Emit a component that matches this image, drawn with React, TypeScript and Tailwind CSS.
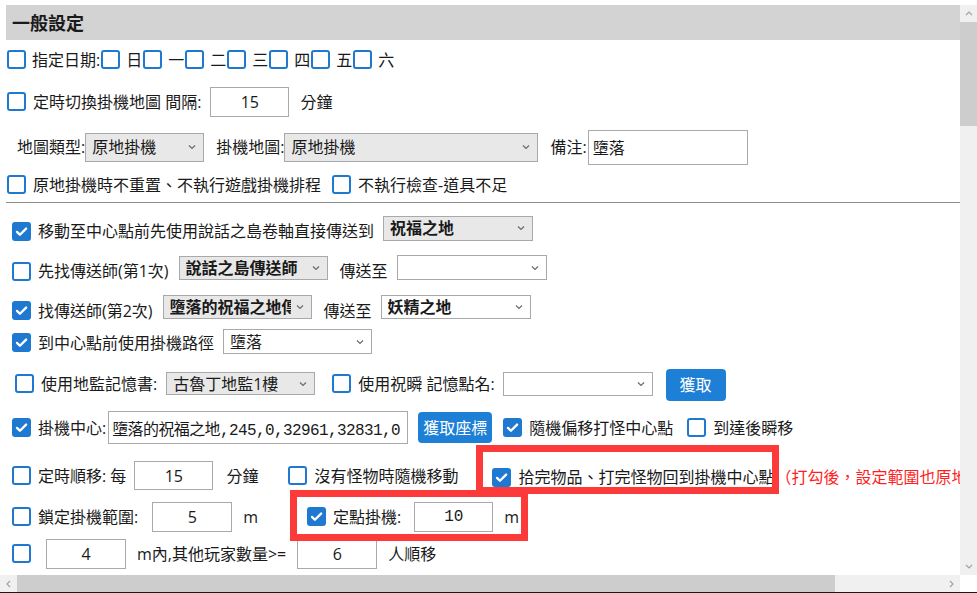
import React from "react";

type CbProps = { checked?: boolean; className?: string };

function Cb({ checked = false, className = "" }: CbProps) {
  return (
    <span
      className={
        "inline-flex shrink-0 w-[19px] h-[19px] rounded-[3px] items-center justify-center " +
        (checked ? "bg-[#1f79d1] " : "border-2 border-[#1f79d1] bg-white ") +
        className
      }
    >
      {checked && (
        <svg viewBox="0 0 16 16" className="w-[15px] h-[15px]">
          <path
            d="M3.2 8.4l3.1 3.1L12.9 4.9"
            stroke="white"
            strokeWidth="2.5"
            fill="none"
            strokeLinecap="round"
            strokeLinejoin="round"
          />
        </svg>
      )}
    </span>
  );
}

function Chevron() {
  return (
    <svg viewBox="0 0 8 5" className="w-[8px] h-[5px] absolute right-[7px] top-1/2 -translate-y-1/2">
      <path d="M1 1l3 3 3-3" stroke="#6b6b6b" strokeWidth="1.2" fill="none" />
    </svg>
  );
}

type SelProps = { text?: string; bold?: boolean; gray?: boolean; className?: string };

function Sel({ text = "", bold = false, gray = false, className = "" }: SelProps) {
  return (
    <div
      className={
        "relative shrink-0 flex items-center border border-[#a9a9a9] pl-[6px] pr-[20px] overflow-hidden whitespace-nowrap " +
        (gray ? "bg-[#e8e8e8] " : "bg-white ") +
        (bold ? "font-bold " : "") +
        className
      }
    >
      <span className="overflow-hidden leading-[20px]">{text}</span>
      <Chevron />
    </div>
  );
}

type BoxProps = { value: string; className?: string };

function Box({ value, className = "" }: BoxProps) {
  return (
    <input
      readOnly
      value={value}
      className={"shrink-0 border border-[#aaaaaa] bg-white text-center outline-none text-[#1a1a1a] " + className}
    />
  );
}

function Btn({ label, className = "" }: { label: string; className?: string }) {
  return (
    <button className={"shrink-0 rounded-[4px] bg-[#1e7fd6] text-white text-[16px] flex items-center justify-center " + className}>
      {label}
    </button>
  );
}

const days = ["日", "一", "二", "三", "四", "五", "六"];

const row = "flex items-center *:shrink-0";

export default function App() {
  return (
    <div className="relative w-[977px] h-[593px] bg-white overflow-hidden whitespace-nowrap text-[16px] leading-none text-[#1a1a1a] font-['Open_Sans','Noto_Sans_CJK_TC',sans-serif]">
      <div className="h-[5px]" />
      <div className="flex h-[570px]">
        {/* settings panel */}
        <div className="w-[960px] overflow-hidden pl-[6px]">
          <div className="h-[35px] bg-[#d3d3d3] flex items-center pl-[6px] text-[18px] font-bold">一般設定</div>

          <div className={row + " h-[39px]"}>
            <Cb className="ml-[1px]" />
            <span className="ml-[6px]">指定日期:</span>
            {days.map((d) => (
              <React.Fragment key={d}>
                <Cb className="ml-[1px]" />
                <span className="ml-[6px]">{d}</span>
              </React.Fragment>
            ))}
          </div>

          <div className={row + " h-[45px]"}>
            <Cb className="ml-[1px]" />
            <span className="ml-[7px]">定時切換掛機地圖 間隔:</span>
            <Box value="15" className="ml-[9px] w-[79px] h-[30px]" />
            <span className="ml-[11px]">分鐘</span>
          </div>

          <div className={row + " h-[46px]"}>
            <span className="ml-[11px]">地圖類型:</span>
            <Sel text="原地掛機" gray className="w-[119px] h-[29px]" />
            <span className="ml-[12px]">掛機地圖:</span>
            <Sel text="原地掛機" gray className="w-[254px] h-[29px]" />
            <span className="ml-[12px]">備注:</span>
            <input readOnly value="墮落" className="ml-[1px] w-[160px] h-[35px] border border-[#aaaaaa] pl-[4px] outline-none" />
          </div>

          <div className={row + " h-[29px]"}>
            <Cb className="ml-[1px]" />
            <span className="ml-[7px]">原地掛機時不重置、不執行遊戲掛機排程</span>
            <Cb className="ml-[11px]" />
            <span className="ml-[7px]">不執行檢查-道具不足</span>
          </div>

          <div className="mt-[3px] h-px bg-[#8c8c8c]" />

          <div className={row + " mt-[8px] h-[40px]"}>
            <Cb checked className="ml-[6px]" />
            <span className="ml-[7px]">移動至中心點前先使用說話之島卷軸直接傳送到</span>
            <Sel text="祝福之地" bold gray className="ml-[9px] w-[150px] h-[25px] mb-[6px]" />
          </div>

          <div className={row + " h-[40px]"}>
            <Cb className="ml-[6px]" />
            <span className="ml-[7px]">先找傳送師(第1次)</span>
            <Sel text="說話之島傳送師" bold gray className="ml-[10px] w-[149px] h-[24px] mb-[7px]" />
            <span className="ml-[12px]">傳送至</span>
            <Sel className="ml-[9px] w-[150px] h-[25px] mb-[7px]" />
          </div>

          <div className={row + " h-[39px]"}>
            <Cb checked className="ml-[6px]" />
            <span className="ml-[7px]">找傳送師(第2次)</span>
            <Sel text="墮落的祝福之地傳送師" bold gray className="ml-[10px] w-[149px] h-[24px] mb-[7px]" />
            <span className="ml-[12px]">傳送至</span>
            <Sel text="妖精之地" bold className="ml-[9px] w-[150px] h-[24px] mb-[7px]" />
          </div>

          <div className={row + " h-[25px]"}>
            <Cb checked className="ml-[6px]" />
            <span className="ml-[7px]">到中心點前使用掛機路徑</span>
            <Sel text="墮落" className="ml-[9px] w-[149px] h-[25px] mb-[2px]" />
          </div>

          <div className={row + " mt-[8px] h-[41px]"}>
            <Cb className="ml-[9px]" />
            <span className="ml-[7px]">使用地監記憶書:</span>
            <Sel text="古魯丁地監1樓" gray className="ml-[9px] w-[149px] h-[23px]" />
            <Cb className="ml-[17px]" />
            <span className="ml-[7px]">使用祝瞬 記憶點名:</span>
            <Sel className="ml-[8px] w-[150px] h-[24px]" />
            <Btn label="獲取" className="ml-[13px] w-[60px] h-[32px] mt-[3px]" />
          </div>

          <div className={row + " h-[47px]"}>
            <Cb checked className="ml-[6px]" />
            <span className="ml-[7px]">掛機中心:</span>
            <input
              readOnly
              value="墮落的祝福之地,245,0,32961,32831,0"
              className="ml-[2px] w-[300px] h-[33px] border border-[#aaaaaa] pl-[3px] outline-none tracking-[-0.6px] font-['Liberation_Mono','Noto_Sans_CJK_TC',monospace]"
            />
            <Btn label="獲取座標" className="ml-[10px] w-[74px] h-[31px]" />
            <Cb checked className="ml-[11px]" />
            <span className="ml-[7px]">隨機偏移打怪中心點</span>
            <Cb className="ml-[14px]" />
            <span className="ml-[7px]">到達後瞬移</span>
          </div>

          <div className={row + " h-[49px]"}>
            <Cb className="ml-[6px]" />
            <span className="ml-[7px]">定時順移: 每</span>
            <Box value="15" className="ml-[8px] w-[79px] h-[29px]" />
            <span className="ml-[13px]">分鐘</span>
            <Cb className="ml-[30px]" />
            <span className="ml-[7px]">沒有怪物時隨機移動</span>
            <Cb checked className="ml-[34px] mt-[3px]" />
            <span className="ml-[7px] mt-[3px]">拾完物品、打完怪物回到掛機中心點</span>
            <span className="ml-[1px] mt-[3px] text-[#ff1f1f]">（打勾後，設定範圍也原地掛機）</span>
          </div>

          <div className={row + " h-[33px]"}>
            <Cb className="ml-[6px]" />
            <span className="ml-[7px]">鎖定掛機範圍:</span>
            <Box value="5" className="ml-[14px] w-[80px] h-[30px]" />
            <span className="ml-[11px]">m</span>
            <Cb checked className="ml-[49px]" />
            <span className="ml-[7px]">定點掛機:</span>
            <Box value="10" className="ml-[13px] w-[79px] h-[30px] font-['Liberation_Mono',monospace]" />
            <span className="ml-[11px]">m</span>
          </div>

          <div className={row + " h-[41px]"}>
            <Cb className="ml-[6px]" />
            <Box value="4" className="ml-[15px] w-[80px] h-[30px]" />
            <span className="ml-[11px]">m內,其他玩家數量&gt;=</span>
            <Box value="6" className="ml-[11px] w-[80px] h-[30px]" />
            <span className="ml-[11px]">人順移</span>
          </div>
        </div>

        {/* vertical scrollbar */}
        <div className="w-[17px] bg-[#f0f0f0] flex flex-col">
          <div className="h-[17px] flex items-center justify-center">
            <svg viewBox="0 0 8 5" className="w-[8px] h-[5px]">
              <path d="M1 4l3-3 3 3" stroke="#a3a3a3" strokeWidth="1.2" fill="none" />
            </svg>
          </div>
          <div className="h-[104px] bg-[#cdcdcd]" />
          <div className="flex-1" />
          <div className="h-[17px] flex items-center justify-center">
            <svg viewBox="0 0 8 5" className="w-[8px] h-[5px]">
              <path d="M1 1l3 3 3-3" stroke="#a3a3a3" strokeWidth="1.2" fill="none" />
            </svg>
          </div>
        </div>
      </div>

      {/* horizontal scrollbar */}
      <div className="flex h-[17px]">
        <div className="w-[960px] flex bg-[#f0f0f0]">
          <div className="w-[17px] flex items-center justify-center">
            <svg viewBox="0 0 5 8" className="w-[5px] h-[8px]">
              <path d="M4 1L1 4l3 3" stroke="#a3a3a3" strokeWidth="1.2" fill="none" />
            </svg>
          </div>
          <div className="w-[818px] bg-[#cdcdcd]" />
          <div className="flex-1" />
          <div className="w-[17px] flex items-center justify-center">
            <svg viewBox="0 0 5 8" className="w-[5px] h-[8px]">
              <path d="M1 1l3 3-3 3" stroke="#a3a3a3" strokeWidth="1.2" fill="none" />
            </svg>
          </div>
        </div>
        <div className="w-[17px] bg-white" />
      </div>
      <div className="h-px bg-[#1a1a1a]" />

      {/* highlight frames */}
      <div className="absolute left-[476px] top-[445px] w-[303px] h-[49px] border-[7px] border-[#fd3a3a] pointer-events-none" />
      <div className="absolute left-[290px] top-[490px] w-[238px] h-[51px] border-[7px] border-[#fd3a3a] pointer-events-none" />
    </div>
  );
}
